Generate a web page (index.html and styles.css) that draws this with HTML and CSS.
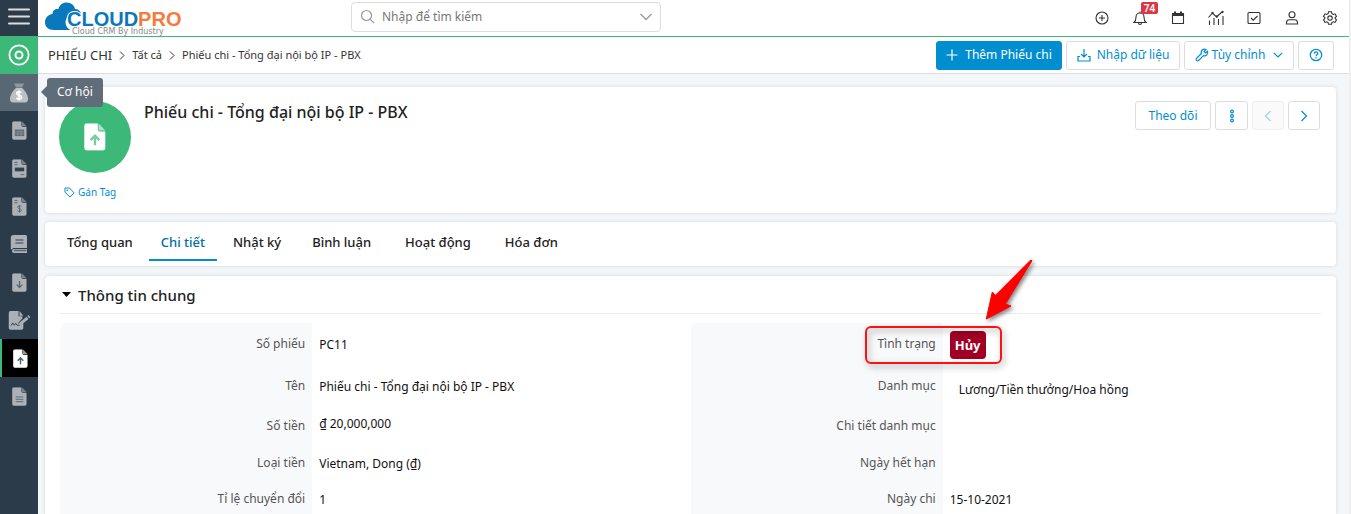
FILE: index.html
```html
<!DOCTYPE html>
<html lang="vi">
<head>
<meta charset="utf-8">
<meta name="viewport" content="width=device-width, initial-scale=1">
<title>Phiếu chi - Tổng đại nội bộ IP - PBX</title>
<link rel="stylesheet" href="styles.css">
</head>
<body>
<svg class="defs" width="0" height="0" aria-hidden="true">
  <symbol id="sheet" viewBox="0 0 16 20"><path d="M2 0h8v4.500a1.500 1.500 0 0 0 1.500 1.500H15.500V18a1.800 1.800 0 0 1-1.800 1.800H2A1.800 1.800 0 0 1 .2 18V1.800A1.800 1.800 0 0 1 2 0z"/><path d="M10.500 0l5 5.300h-5z" opacity=".6"/></symbol>
</svg>
<div class="app">
  <nav class="sidebar" aria-label="Menu chính">
    <button class="side-menu" type="button" aria-label="Menu"><svg width="22" height="18" viewBox="0 0 22 18"><path d="M1 1.500h20M1 8.500h20M1 15.500h20" stroke="#ddd" stroke-width="2" stroke-linecap="round"/></svg></button>
    <a class="side-item side-home" href="#" aria-label="Trang chủ"><svg width="22" height="22" viewBox="0 0 22 22" fill="none" stroke="#fff"><circle cx="11" cy="11" r="9.600" stroke-width="1.800"/><circle cx="11" cy="11" r="3.500" stroke-width="2"/></svg></a>
    <a class="side-item side-hover" href="#" aria-describedby="tip"><svg width="20" height="20" viewBox="0 0 20 20"><path d="M5 .5h10l-2 4H7z" fill="#8f979f"/><path d="M7 5h6c3 2.500 6 7 6 11 0 2-1 3.500-3 3.500H4c-2 0-3-1.500-3-3.500C1 12 4 7.500 7 5z" fill="#bcc1c5"/><path d="M12.300 9.700C11.700 9 11 8.800 10 8.800c-1.300 0-2.300.7-2.300 1.700 0 2.500 4.800 1.200 4.800 3.700 0 1.100-1.100 1.800-2.500 1.800-1.200 0-2-.4-2.600-1.200M10 7.500v10" fill="none" stroke="#fff" stroke-width="1.500"/></svg><span class="tooltip" id="tip" role="tooltip">Cơ hội</span></a>
    <a class="side-item" href="#" aria-label="Báo giá"><svg width="15" height="19" viewBox="0 0 16 20"><use href="#sheet"/><path d="M3 9h10v7H3z" fill="#5b6672"/><path d="M3 11.500h10M3 13.800h10M6.300 9v7M9.700 9v7" stroke="#8d959d" stroke-width=".8"/></svg></a>
    <a class="side-item" href="#" aria-label="Đơn hàng"><svg width="15" height="19" viewBox="0 0 16 20"><use href="#sheet"/><path d="M3 9h10v4H3z" fill="#33414e"/><path d="M2.500 3.500H6M2.500 6H6M9 16.500h4" stroke="#5b6672"/></svg></a>
    <a class="side-item" href="#" aria-label="Hóa đơn"><svg width="15" height="19" viewBox="0 0 16 20"><use href="#sheet"/><path d="M2.500 3.500H6M2.500 6H6M10 10c-1-1.500-4-1-4 .7 0 2 4 1.200 4 3.200 0 1.800-3.200 2-4.200.5M8 8.500v8" fill="none" stroke="#5b6672"/></svg></a>
    <a class="side-item" href="#" aria-label="Sổ quỹ"><svg width="18" height="20" viewBox="0 0 18 20"><path d="M4 1h11.500A1.500 1.500 0 0 1 17 2.500V14H4a2 2 0 0 0-2 1.500L.8 15V4A3 3 0 0 1 4 1z"/><path d="M4 15h13v4H4a2 2 0 0 1 0-4z"/><path d="M5.500 6h8M5.500 9h8" stroke="#33414e"/><path d="M4 16.500h12.500" stroke="#5b6672" stroke-width="1.500"/></svg></a>
    <a class="side-item" href="#" aria-label="Phiếu thu"><svg width="15" height="19" viewBox="0 0 16 20"><use href="#sheet"/><path d="M8 8.500V15M5 12.300l3 3 3-3" fill="none" stroke="#5b6672" stroke-width="1.400"/></svg></a>
    <a class="side-item" href="#" aria-label="Hợp đồng"><svg width="23" height="19" viewBox="-4 0 24 20"><path d="M-1.500 0H7v5.500h4V8l-4 4v2h3l2-2v6a1.800 1.800 0 0 1-1.800 1.800H-1.500A1.800 1.800 0 0 1-3.300 18V1.800A1.800 1.800 0 0 1-1.500 0zM8 0l4 5H8z"/><path d="M8 12l7.500-6 2 2.300L10 14.500l-3 .5zM16.200 5.300l1.300-1 2 2.300-1.300 1.100z"/><path d="M-1 15.500l2-3 1.500 2.500 1.500-2 1.500 2H8" fill="none" stroke="#33414e"/></svg></a>
    <a class="side-item side-active" href="#" aria-label="Phiếu chi" aria-current="page"><svg width="15" height="19" viewBox="0 0 16 20"><use href="#sheet"/><path d="M8 16V9.500M5 12.300l3-3 3 3" fill="none" stroke="#53606b" stroke-width="1.500"/></svg></a>
    <a class="side-item" href="#" aria-label="Báo cáo"><svg width="15" height="19" viewBox="0 0 16 20"><use href="#sheet"/><path d="M4 10.500h8M4 13h8M4 15.500h8" stroke="#5b6672"/></svg></a>
  </nav>

  <div class="page">
    <header class="topbar">
      <a class="logo" href="#" aria-label="CloudPro">
        <svg width="140" height="34" viewBox="0 0 140 34">
          <path d="M9 28C3 28 0 24.500 0 20.500 0 16 3 12.500 7.500 12 7.500 8 10.500 6.500 13.500 7 14.500 3 17.500.5 21.500.5c5 0 8 3 8.500 6.500 3 0 5 1.500 6 4.500C27 9.500 21 14 20.500 20c0 4 2 6.500 5 8z" fill="#0a78bd"/>
          <text class="logo-name" x="22" y="24"><tspan fill="#0a78bd">CLOUD</tspan><tspan fill="#f47b3b">PRO</tspan></text>
          <text class="logo-tag" x="27" y="32">Cloud CRM By Industry</text>
        </svg>
      </a>
      <label class="search">
        <svg width="16" height="16" viewBox="0 0 16 16" fill="none" stroke="#999" stroke-width="1.200"><circle cx="6.500" cy="6.500" r="5"/><path d="M10.300 10.300l3.700 3.700"/></svg>
        <input type="search" placeholder="Nhập để tìm kiếm" aria-label="Nhập để tìm kiếm">
        <svg width="12" height="8" viewBox="0 0 12 8" fill="none" stroke="#999" stroke-width="1.300"><path d="M.5 1L6 6.500 11.500 1"/></svg>
      </label>
      <div class="tools">
        <button type="button" aria-label="Thêm nhanh"><svg viewBox="0 0 16 16"><circle cx="8" cy="8" r="6"/><path d="M8 5v6M5 8h6"/></svg></button>
        <button type="button" aria-label="Thông báo"><svg viewBox="0 0 16 16"><path d="M2 12.500c1.500-1.200 2-2.500 2-5.500a4 4 0 0 1 8 0c0 3 .5 4.300 2 5.500zM6.500 13a1.500 1.500 0 0 0 3 0M8 1.500V3"/></svg><span class="count">74</span></button>
        <button type="button" aria-label="Lịch"><svg viewBox="0 0 16 16"><path d="M2.500 3.500h11v10h-11z"/><path d="M2 3h12v3H2zM4 1.500h2V3H4zM10 1.500h2V3h-2z" fill="#333" stroke="none"/></svg></button>
        <button type="button" aria-label="Báo cáo"><svg class="wide" viewBox="0 0 18 16"><path d="M1.500 7.500l4-4.500 4 4 5.500-5M2.500 10.500V15M7 8v7M11.500 9v6M16 6v9"/><circle cx="5.500" cy="3" r=".6"/><circle cx="10" cy="6.500" r=".6"/><circle cx="15.500" cy="2" r=".6"/></svg></button>
        <button type="button" aria-label="Công việc"><svg viewBox="0 0 16 16"><rect x="2" y="2.500" width="12" height="11" rx="1"/><path d="M5 8l2.200 2.200L11.500 6"/></svg></button>
        <button type="button" aria-label="Tài khoản"><svg viewBox="0 0 16 16"><circle cx="8" cy="4.800" r="3"/><path d="M2.500 14v-1.500A3 3 0 0 1 5.500 9.700h5a3 3 0 0 1 3 2.800V14z"/></svg></button>
        <button type="button" aria-label="Cài đặt"><svg viewBox="0 0 16 16"><path d="M6.500 1.800h3l.4 1.800 1.300.8 1.800-.6 1.500 2.600L13.200 7.600v1l1.300 1.200-1.500 2.600-1.800-.6-1.300.8-.4 1.700h-3l-.4-1.700-1.300-.8-1.800.6L1.500 9.800l1.300-1.200v-1L1.500 6.400 3 3.800l1.800.6 1.300-.8z"/><circle cx="8" cy="8.100" r="2.200"/></svg></button>
      </div>
    </header>

    <div class="crumbbar">
      <nav class="crumbs" aria-label="Đường dẫn">
        <a class="crumb-main" href="#">PHIẾU CHI</a>
        <svg width="6" height="9" viewBox="0 0 6 9"><path d="M1 .5l4 4-4 4"/></svg>
        <a href="#">Tất cả</a>
        <svg width="6" height="9" viewBox="0 0 6 9"><path d="M1 .5l4 4-4 4"/></svg>
        <span>Phiếu chi - Tổng đại nội bộ IP - PBX</span>
      </nav>
      <div class="actions">
        <button class="btn btn-primary" type="button"><svg width="12" height="12" viewBox="0 0 12 12"><path d="M6 .5v11M.5 6h11"/></svg>Thêm Phiếu chi</button>
        <button class="btn btn-import" type="button"><svg width="14" height="14" viewBox="0 0 14 14"><path d="M7 1v8M4 6l3 3 3-3M3 8.500H1V13h12V8.500h-2"/></svg>Nhập dữ liệu</button>
        <button class="btn btn-custom" type="button"><svg width="14" height="14" viewBox="0 0 14 14"><path d="M12.500 3.200L10.500 5 9 3.500l2-2C9 .6 6.800 1.500 6.300 3.500c-.2.800-.1 1.500.1 2L1.300 10.700a1.500 1.500 0 0 0 2 2L8.500 7.600c2.500 1 5-1.500 4-4.400z"/></svg>Tùy chỉnh<svg class="caret" width="10" height="6" viewBox="0 0 10 6"><path d="M.8.800L5 5 9.200.8"/></svg></button>
        <button class="btn btn-help" type="button" aria-label="Trợ giúp"><svg width="14" height="14" viewBox="0 0 14 14"><circle cx="7" cy="7" r="5.700"/><path d="M5.200 5.700c0-2.300 3.600-2.300 3.600-.2C8.800 6.800 7 6.700 7 8.200M7 9.300v1.200"/></svg></button>
      </div>
    </div>

    <main class="content">
      <section class="card summary">
        <div class="identity">
          <div class="avatar"><svg width="22" height="28" viewBox="0 0 16 20"><use href="#sheet"/><path d="M8 16V9.500M4.800 12.300L8 9l3.200 3.300" fill="none" stroke="#7bcba1" stroke-width="1.700"/></svg></div>
          <a class="tag" href="#"><svg width="11" height="11" viewBox="0 0 11 11"><path d="M1 1h4.500L10 5.800 6 10 1 5.300z"/><circle cx="3.200" cy="3.200" r=".4"/></svg>Gán Tag</a>
        </div>
        <h1>Phiếu chi - Tổng đại nội bộ IP - PBX</h1>
        <div class="record-actions">
          <button class="btn btn-follow" type="button">Theo dõi</button>
          <button class="btn btn-more" type="button" aria-label="Thêm"><svg width="6" height="14" viewBox="0 0 6 14"><circle cx="3" cy="2.500" r="1.400"/><circle cx="3" cy="7" r="1.400"/><circle cx="3" cy="11.500" r="1.400"/></svg></button>
          <button class="btn btn-step" type="button" aria-label="Trước" disabled><svg width="8" height="12" viewBox="0 0 8 12"><path d="M6.500 1L1.500 6l5 5"/></svg></button>
          <button class="btn btn-step" type="button" aria-label="Sau"><svg width="8" height="12" viewBox="0 0 8 12"><path d="M1.500 1l5 5-5 5"/></svg></button>
        </div>
      </section>

      <nav class="card tabs" aria-label="Nội dung">
        <a href="#">Tổng quan</a>
        <a class="current" href="#" aria-current="page">Chi tiết</a>
        <a href="#">Nhật ký</a>
        <a class="roomy" href="#">Bình luận</a>
        <a class="roomy" href="#">Hoạt động</a>
        <a class="roomy" href="#">Hóa đơn</a>
      </nav>

      <section class="card details">
        <h2><svg width="9" height="5" viewBox="0 0 9 5"><path d="M0 0h9L4.500 5z"/></svg>Thông tin chung</h2>
        <div class="fields">
          <dl>
            <dt>Số phiếu</dt><dd>PC11</dd>
            <dt>Tên</dt><dd>Phiếu chi - Tổng đại nội bộ IP - PBX</dd>
            <dt>Số tiền</dt><dd class="amount">₫ 20,000,000</dd>
            <dt>Loại tiền</dt><dd>Vietnam, Dong (₫)</dd>
            <dt>Tỉ lệ chuyển đổi</dt><dd>1</dd>
          </dl>
          <dl>
            <dt>Tình trạng</dt>
            <dd class="status"><span class="badge">Hủy</span>
              <span class="highlight"></span>
              <svg class="arrow" width="60" height="72" viewBox="0 0 60 72"><path d="M49.700 6L14.300 41.500l-3-3.500L5.300 65 30 52l-5.700-2L51 6.700z" stroke="#f00" stroke-linejoin="round"/></svg>
            </dd>
            <dt>Danh mục</dt><dd class="category">Lương/Tiền thưởng/Hoa hồng</dd>
            <dt>Chi tiết danh mục</dt><dd></dd>
            <dt>Ngày hết hạn</dt><dd></dd>
            <dt>Ngày chi</dt><dd>15-10-2021</dd>
          </dl>
        </div>
      </section>
    </main>
  </div>
</div>
</body>
</html>
```
FILE: styles.css
```css
* { box-sizing: border-box; }
html { overflow: hidden; }
body {
  margin: 0;
  font: 12px/18px "Noto Sans", "Open Sans", sans-serif;
  color: #222;
  background: #f3f7fa;
}
a { color: inherit; text-decoration: none; }
button { font: inherit; cursor: pointer; }
.defs { position: absolute; }
.app { display: flex; min-height: 100vh; border-right: 2px solid #f0f0f0; }

.sidebar { flex: none; width: 38px; background: #2c3b49; display: flex; flex-direction: column; }
.side-menu { height: 36px; padding: 0 0 2px; border: 0; background: none; display: grid; place-items: center; }
.side-item { position: relative; height: 38px; display: grid; place-items: center; fill: #abb1b7; }
.side-home { background: #3cb878; }
.side-hover { height: 37px; background: #596673; }
.side-active { background: #000; fill: #fff; border-left: 2px solid #3cb878; }
.tooltip {
  position: absolute; z-index: 5; left: 47px; top: 4px;
  padding: 5px 10px; height: 29px; border-radius: 3px;
  background: #5f6c79; color: #fff; white-space: nowrap;
}
.tooltip::before {
  content: ""; position: absolute; left: -6px; top: 8px;
  border: solid transparent; border-width: 6px 6px 6px 0; border-right-color: #5f6c79;
}

.page { flex: 1; min-width: 0; }
.topbar { height: 37px; display: flex; background: #fff; border-bottom: 1px solid #3cb878; }
.logo { margin-left: 7px; padding-top: 2px; }
.logo svg { display: block; }
.logo-name { font: bold 20px "Liberation Sans", Arial, sans-serif; paint-order: stroke; stroke: #fff; stroke-width: 2px; }
.logo-tag { font: 8px "DejaVu Sans", sans-serif; fill: #888; }
.search {
  display: flex; align-items: center; gap: 6px; width: 310px; height: 30px; margin: 2px 0 0 166px; padding: 0 8px;
  border: 1px solid #ddd; border-radius: 4px;
}
.search input { flex: 1; min-width: 0; padding: 0; border: 0; outline: 0; background: none; font: inherit; color: #555; }
.search input::placeholder { color: #777; opacity: 1; }
.tools { display: flex; margin-left: auto; }
.tools button { position: relative; width: 38px; padding: 0; border: 0; background: none; display: grid; place-items: center; }
.tools svg { width: 16px; height: 16px; fill: none; stroke: #333; stroke-width: 1.1; }
.tools svg.wide { width: 18px; }
.count {
  position: absolute; left: 20px; top: 2px; width: 17px; height: 12px; border-radius: 2px;
  background: #dc3545; color: #fff; font-size: 10px; font-weight: 600; line-height: 12px; text-align: center;
}

.crumbbar { height: 37px; display: flex; align-items: center; justify-content: space-between; padding: 0 15px 0 10px; background: #fff; border-bottom: 1px solid #ddd; }
.crumbs { display: flex; align-items: center; gap: 7px; font-size: 11px; color: #333; }
.crumbs svg { fill: none; stroke: #333; }
.crumb-main { font-size: 13px; }
.actions, .record-actions { display: flex; gap: 4px; }
.btn {
  height: 29px; padding: 0; display: flex; align-items: center; justify-content: center;
  background: #fff; border: 1px solid #ddd; border-radius: 3px; color: #008ecf; white-space: nowrap;
}
.btn svg { fill: none; stroke: currentColor; stroke-width: 1.2; }
.btn-primary { width: 126px; gap: 7px; background: #008ecf; border-color: #008ecf; color: #fff; }
.btn-import { width: 114px; gap: 6px; }
.btn-custom { width: 110px; gap: 3px; }
.btn-custom .caret { margin-left: 5px; }
.btn-help { width: 36px; }
.btn-follow { width: 76px; }
.btn-more { width: 33px; }
.btn-step { width: 32px; }
.btn:disabled { background: #fafafa; border-color: #eee; color: #99d2ec; }

.content { padding: 13px 13px 0 7px; display: flex; flex-direction: column; gap: 9px; }
.card { background: #fff; border-radius: 4px; box-shadow: 0 0 4px rgba(0, 0, 0, .12); }
.summary { display: flex; align-items: flex-start; min-height: 126px; padding: 14px 16px 12px 14px; }
.identity { width: 72px; display: flex; flex-direction: column; gap: 10px; }
.avatar { width: 72px; height: 72px; border-radius: 50%; background: #3cb878; fill: #fff; display: grid; place-items: center; }
.tag { display: flex; align-items: center; gap: 3px; padding-left: 5px; font-size: 10px; color: #008ecf; white-space: nowrap; }
.tag svg { fill: none; stroke: #008ecf; }
h1 { flex: 1; margin: 0 0 0 13px; font-size: 16px; line-height: 22px; font-weight: 500; }
.tabs { display: flex; gap: 4px; padding: 0 10px; height: 44px; font-size: 13px; font-weight: 500; }
.tabs a { height: 39px; padding: 11px 12px 0; border-bottom: 2px solid transparent; }
.tabs .roomy { padding-inline: 15px; }
.tabs .current { color: #006ea3; border-color: #008ecf; }
.details { margin-top: 1px; padding: 0 15px; }
h2 { margin: 0; height: 38px; display: flex; align-items: center; gap: 7px; padding-left: 2px; border-bottom: 1px solid #eee; font-size: 15px; font-weight: 500; }
.fields { display: grid; grid-template-columns: 1fr 1fr; padding-top: 9px; }
dl { margin: 0; display: grid; grid-template-columns: 40% 60%; grid-template-rows: 42px 42px 38px 36px 36px; background: linear-gradient(90deg, #f8f9fb 40%, #fff 40%); border-radius: 6px 0 0 0; }
dt, dd { margin: 0; padding: 0 7px; display: flex; align-items: center; }
dt { justify-content: flex-end; color: #555; }
dd { padding-top: 2px; color: #111; }
.amount { padding: 0 7px 4px; }
.category { padding: 8px 16px 0; }
.status { position: relative; }
.badge { padding: 5px; height: 28px; border-radius: 4px; background: #a00024; color: #fff; font-size: 13px; font-weight: 700; }
.highlight { position: absolute; left: -78px; top: 3px; width: 137px; height: 38px; border: 2px solid #f11; border-radius: 6px; filter: drop-shadow(2px 3px 3px rgba(0, 0, 0, .4)); }
.arrow { position: absolute; left: 38px; top: -69px; fill: #f00; filter: drop-shadow(2px 2px 2px rgba(0, 0, 0, .5)); }
```
